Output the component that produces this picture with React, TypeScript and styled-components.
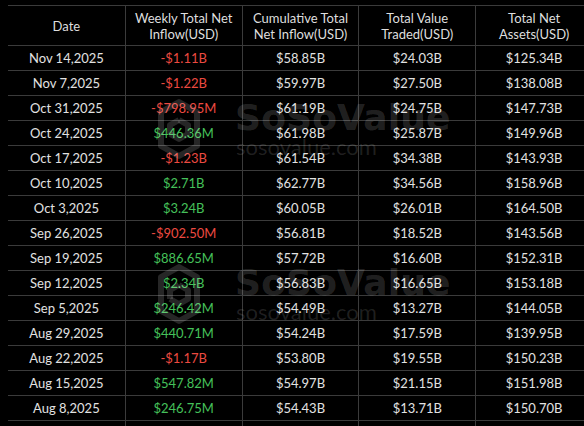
import React from 'react'
import styled, { createGlobalStyle } from 'styled-components'

const GlobalStyle = createGlobalStyle`
  html, body {
    margin: 0;
    padding: 0;
    background: #000;
    overflow: hidden;
  }
  body {
    padding: 5px 0 0 8px;
    font-family: Lato, 'Liberation Sans', sans-serif;
  }
`

const Page = styled.div`
  position: relative;
  width: 600px;
`

const Table = styled.div`
  display: flex;
  flex-direction: column;
  border-top: 1px solid #3b3b3b;
`

const Row = styled.div<{ $head?: boolean }>`
  display: grid;
  grid-template-columns: repeat(5, 116.8px);
  height: ${p => (p.$head ? '39px' : '24px')};
  border-bottom: 1px solid #3b3b3b;
`

const Cell = styled.div<{ $tone?: 'up' | 'down' }>`
  display: flex;
  align-items: center;
  justify-content: center;
  text-align: center;
  font-size: 13px;
  line-height: 16px;
  color: ${p => (p.$tone === 'up' ? '#45c05a' : p.$tone === 'down' ? '#ec4a40' : '#e2e2e2')};
  & + & {
    border-left: 1px solid #3b3b3b;
  }
`

const HeadCell = styled(Cell)`
  color: #dedede;
`

// watermark over the table
const Watermark = styled.div<{ $top: number }>`
  position: absolute;
  left: 149px;
  top: ${p => p.$top}px;
  display: flex;
  align-items: center;
  gap: 34px;
  pointer-events: none;
`

const MarkText = styled.div`
  display: flex;
  flex-direction: column;
`

const Brand = styled.div`
  font-family: 'DejaVu Sans', sans-serif;
  font-weight: 700;
  font-size: 36px;
  line-height: 36px;
  letter-spacing: 0.2px;
  color: rgba(255, 255, 255, 0.15);
`

const Site = styled.div`
  font-family: Lato, sans-serif;
  font-size: 22px;
  line-height: 22px;
  margin-left: 1px;
  color: rgba(255, 255, 255, 0.13);
`

const Logo = () => (
  <svg width="44" height="62" viewBox="0 0 44 62">
    <g fill="none" stroke="rgba(255,255,255,0.15)" strokeWidth="6" strokeLinejoin="round">
      <polygon points="22,4 40,14 40,48 22,58 4,48 4,14" />
      <polyline points="22,22 31,27 31,36 22,41 13,36" />
      <polyline points="13,36 13,27 22,22" />
    </g>
  </svg>
)

const header = [
  ['Date'],
  ['Weekly Total Net', 'Inflow(USD)'],
  ['Cumulative Total', 'Net Inflow(USD)'],
  ['Total Value', 'Traded(USD)'],
  ['Total Net', 'Assets(USD)'],
]

const rows = [
  ['Nov 14,2025', '-$1.11B', '$58.85B', '$24.03B', '$125.34B'],
  ['Nov 7,2025', '-$1.22B', '$59.97B', '$27.50B', '$138.08B'],
  ['Oct 31,2025', '-$798.95M', '$61.19B', '$24.75B', '$147.73B'],
  ['Oct 24,2025', '$446.36M', '$61.98B', '$25.87B', '$149.96B'],
  ['Oct 17,2025', '-$1.23B', '$61.54B', '$34.38B', '$143.93B'],
  ['Oct 10,2025', '$2.71B', '$62.77B', '$34.56B', '$158.96B'],
  ['Oct 3,2025', '$3.24B', '$60.05B', '$26.01B', '$164.50B'],
  ['Sep 26,2025', '-$902.50M', '$56.81B', '$18.52B', '$143.56B'],
  ['Sep 19,2025', '$886.65M', '$57.72B', '$16.60B', '$152.31B'],
  ['Sep 12,2025', '$2.34B', '$56.83B', '$16.65B', '$153.18B'],
  ['Sep 5,2025', '$246.42M', '$54.49B', '$13.27B', '$144.05B'],
  ['Aug 29,2025', '$440.71M', '$54.24B', '$17.59B', '$139.95B'],
  ['Aug 22,2025', '-$1.17B', '$53.80B', '$19.55B', '$150.23B'],
  ['Aug 15,2025', '$547.82M', '$54.97B', '$21.15B', '$151.98B'],
  ['Aug 8,2025', '$246.75M', '$54.43B', '$13.71B', '$150.70B'],
  // next row only peeks in at the bottom edge
  ['', '', '', '', ''],
]

const App: React.FC = () => {
  return (
    <Page>
      <GlobalStyle />
      <Table>
        <Row $head>
          {header.map((lines, i) => (
            <HeadCell key={i}>
              <div>
                {lines.map((l, j) => (
                  <div key={j}>{l}</div>
                ))}
              </div>
            </HeadCell>
          ))}
        </Row>
        {rows.map((r, k) => (
          <Row key={k}>
            {r.map((v, i) => (
              <Cell key={i} $tone={i === 1 ? (v.startsWith('-') ? 'down' : 'up') : undefined}>
                {v}
              </Cell>
            ))}
          </Row>
        ))}
      </Table>
      {[93, 258].map(top => (
        <Watermark key={top} $top={top}>
          <Logo />
          <MarkText>
            <Brand>SoSoValue</Brand>
            <Site>sosovalue.com</Site>
          </MarkText>
        </Watermark>
      ))}
    </Page>
  )
}

export default App
